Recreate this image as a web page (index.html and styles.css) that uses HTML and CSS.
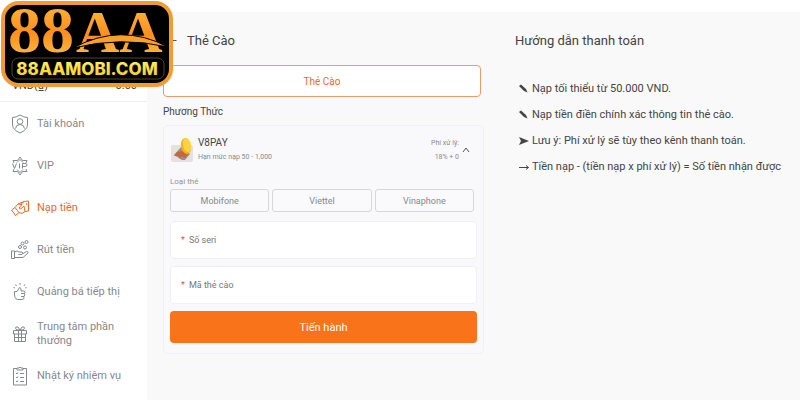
FILE: index.html
```html
<!DOCTYPE html>
<html lang="vi">
<head>
  <meta charset="UTF-8">
  <meta name="viewport" content="width=device-width, initial-scale=1.0">
  <title>Nạp tiền - Thẻ Cào</title>
  <link rel="stylesheet" href="styles.css">
</head>
<body>
  <a href="#" class="logo" aria-label="88AAMOBI.COM">
    <svg width="172" height="88" viewBox="0 0 172 88">
      <defs>
        <linearGradient id="gold" x1="0" y1="0" x2="0" y2="1">
          <stop offset="0" stop-color="#ffc043"/>
          <stop offset="0.55" stop-color="#fb8f1e"/>
          <stop offset="1" stop-color="#ffcb50"/>
        </linearGradient>
        <linearGradient id="yellow" x1="0" y1="0" x2="0" y2="1">
          <stop offset="0" stop-color="#fff36a"/>
          <stop offset="1" stop-color="#f5c81c"/>
        </linearGradient>
      </defs>
      <rect x="2" y="3" width="168" height="82" rx="16" fill="#000" stroke="#f09c33" stroke-width="4"/>
      <text x="7" y="52" class="logo-digits">88</text>
      <text x="75" y="52" class="logo-letters">AA</text>
      <path d="M72 48 Q120 22 167 47 Q120 36 72 48Z" fill="#f9a02c" stroke="#000" stroke-width="1"/>
      <rect x="11" y="58" width="152" height="21" rx="6" fill="none" stroke="#50452b"/>
      <text x="86" y="75" text-anchor="middle" class="logo-domain">88AAMOBI.COM</text>
    </svg>
  </a>

  <div class="page">
    <aside class="sidebar">
      <div class="balance"><span>VND(₫)</span><span>0.00</span></div>
      <nav class="menu">
        <a href="#">
          <svg viewBox="0 0 18 20"><path d="M9 1 Q13 3.5 16.500 3.500 V11 Q16 16 9 19 Q2 16 1.500 11 V3.500 Q5 3.500 9 1Z"/><circle cx="9" cy="7.500" r="2.800"/><path d="M4.500 14.500 Q5 10.500 9 10.500 Q13 10.500 13.500 14.500"/></svg>
          <span>Tài khoản</span>
        </a>
        <a href="#">
          <svg viewBox="0 0 18 20"><path d="M3 7 L2 4.500 H6.500 L9 1 L11.500 4.500 H16 L15 7 M3 13 L2 15.500 H6.500 L9 19 L11.500 15.500 H16 L15 13 M6 6.500 L9 3.500 L12 6.500 M6 13.500 L9 16.500 L12 13.500 M1.500 7.500 L3.500 12.500 L5.500 7.500 M8.500 7.500 V12.500 M11.500 12.500 V7.500 H14 Q16 7.500 16 9 Q16 10.500 14 10.500 H11.500"/></svg>
          <span>VIP</span>
        </a>
        <a href="#" class="active">
          <svg viewBox="0 0 18 20"><path d="M0.500 12 L4 9.500 L8 14.500 L4.500 17.500Z M4 9.500 L7 6 L13 3.500 L17.500 3 V13 L14 13.500 L11 15.500 L8 14.500 M7 6 L11 6.500 L8 10 Q9.500 11.500 11 10 L13 8 L14 13.500 M13 3.500 L9.500 6.500"/><circle cx="15.500" cy="6" r="0.500"/></svg>
          <span>Nạp tiền</span>
        </a>
        <a href="#">
          <svg viewBox="0 0 18 20"><path d="M0.500 11 H3.500 V18.500 H0.500Z M3.500 12 Q6 10 8 12 H11 Q12.500 13 11 14.500 H7.500 M12 13.500 L15.500 11.500 Q17.500 11.500 17 13 L12 17.500 H3.500"/><circle cx="9" cy="7" r="1.500"/><circle cx="11.500" cy="3.500" r="1.500"/><circle cx="15.500" cy="2" r="1.500"/><circle cx="14" cy="7.500" r="1.500"/></svg>
          <span>Rút tiền</span>
        </a>
        <a href="#">
          <svg viewBox="0 0 18 20"><path d="M3.500 9.500 H6 L8.500 5.500 Q10.500 5.500 10 9 H13.500 Q14.500 10 13.500 11.500 Q14.500 13 13 14.500 Q13.500 17.500 11 17.500 H6.500 Q3 17 3.500 9.500Z M10 11.500 H13.500 M10 14.500 H13 M9 1 V3 M4.500 2.500 L5.500 4 M14 2.500 L13 4 M2.500 5.500 L4 6 M15.500 5.500 L14 6"/></svg>
          <span>Quảng bá tiếp thị</span>
        </a>
        <a href="#">
          <svg viewBox="0 0 18 20"><path d="M2.500 6.500 H15.500 V10 H2.500Z M3.500 10 V17.500 H14.500 V10 M7.500 6.500 V17.500 M10.500 6.500 V17.500 M3.500 13.500 H14.500 M9 6 Q3 6 5 3 Q7 1.500 9 6 Q11 1.500 13 3 Q15 6 9 6"/></svg>
          <span>Trung tâm phần thưởng</span>
        </a>
        <a href="#">
          <svg viewBox="0 0 18 20"><path d="M6 2.500 H2.500 V19 H15.500 V2.500 H12 M6 4 V2 H8 Q9 0 10 2 H12 V4Z M5 7 L6 8 L7 6.500 M9 7.500 H13 M5 11 L6 12 L7 10.500 M9 11.500 H13 M5 15 L6 16 L7 14.500 M9 15.500 H13"/></svg>
          <span>Nhật ký nhiệm vụ</span>
        </a>
      </nav>
    </aside>

    <main class="content">
      <section class="payment">
        <header class="title">
          <button type="button" class="back" aria-label="Quay lại">
            <svg width="14" height="12" viewBox="0 0 14 12"><path d="M13.500 5.500 H1 M5.500 1 L1 5.500 L5.500 10"/></svg>
          </button>
          <h1>Thẻ Cào</h1>
        </header>
        <button type="button" class="tab">Thẻ Cào</button>
        <h2>Phương Thức</h2>

        <form class="card">
          <div class="method">
            <svg class="method-icon" width="24" height="26" viewBox="0 0 24 26">
              <rect x="1" y="8" width="22" height="17" rx="2" fill="#e6e1de"/>
              <path d="M4 18 L12 9 L20 17 L15 23 H12Z" fill="#96918f"/>
              <path d="M4 19 L7 15 L15 14 L18 17 L15 21 L12 19 L10 22 L9 19Z" fill="#c9653d"/>
              <ellipse cx="16" cy="9" rx="5" ry="8" fill="#f2b51d" transform="rotate(-12 16 9)"/>
              <ellipse cx="17" cy="8" rx="4" ry="7" fill="#ffd33f" transform="rotate(-12 17 8)"/>
            </svg>
            <div class="method-info">
              <strong>V8PAY</strong>
              <small>Hạn mức nạp 50 - 1,000</small>
            </div>
            <div class="fee"><span>Phí xử lý:</span><span>18% + 0</span></div>
            <button type="button" class="toggle" aria-label="Thu gọn">
              <svg width="8" height="6" viewBox="0 0 8 6"><path d="M1 5 L4 1 L7 5"/></svg>
            </button>
          </div>

          <div class="card-type">Loại thẻ</div>
          <div class="types">
            <button type="button">Mobifone</button>
            <button type="button">Viettel</button>
            <button type="button">Vinaphone</button>
          </div>

          <label class="field"><span>*</span><input type="text" placeholder="Số seri" aria-label="Số seri"></label>
          <label class="field"><span>*</span><input type="text" placeholder="Mã thẻ cào" aria-label="Mã thẻ cào"></label>
          <button type="submit" class="submit">Tiến hành</button>
        </form>
      </section>

      <section class="guide">
        <h1>Hướng dẫn thanh toán</h1>
        <ul>
          <li>
            <svg viewBox="0 0 12 12"><path d="M1 3 L3 1.500 L8 6 L9.500 9.500 L6 8Z" fill="#454545"/></svg>
            <span>Nạp tối thiểu từ 50.000 VND.</span>
          </li>
          <li>
            <svg viewBox="0 0 12 12"><path d="M1 3 L3 1.500 L8 6 L9.500 9.500 L6 8Z" fill="#454545"/></svg>
            <span>Nạp tiền điền chính xác thông tin thẻ cào.</span>
          </li>
          <li>
            <svg viewBox="0 0 12 12"><path d="M1 2 L11 6 L1 10 L3 6Z" fill="#454545"/></svg>
            <span>Lưu ý: Phí xử lý sẽ tùy theo kênh thanh toán.</span>
          </li>
          <li>
            <svg viewBox="0 0 12 12"><path d="M1 6.500 H10.500 M8 4.500 L10.500 6.500 L8 8.500" fill="none" stroke="#454545"/></svg>
            <span>Tiền nạp - (tiền nạp x phí xử lý) = Số tiền nhận được</span>
          </li>
        </ul>
      </section>
    </main>
  </div>
</body>
</html>
```
FILE: styles.css
```css
* {
  box-sizing: border-box;
}

body {
  margin: 0;
  background: #fff;
  color: #444;
  font-family: Roboto, "Noto Sans", sans-serif;
  font-size: 11px;
}

h1, h2, ul {
  margin: 0;
  padding: 0;
  font-weight: normal;
}

button {
  font-family: inherit;
  cursor: pointer;
}

/* Logo floats over the page corner */
.logo {
  position: absolute;
  top: 0;
  left: 1px;
  z-index: 2;
}

.logo svg {
  display: block;
}

.logo-digits,
.logo-letters {
  font-family: "Liberation Serif", serif;
  font-weight: bold;
  fill: url(#gold);
}

.logo-digits {
  font-size: 66px;
}

.logo-letters {
  font-size: 60px;
}

.logo-domain {
  font-family: Inter, sans-serif;
  font-size: 17px;
  font-weight: 800;
  fill: url(#yellow);
}

.page {
  display: grid;
  grid-template-columns: 147px 1fr;
  min-height: 100vh;
}

/* Sidebar */
.balance {
  display: flex;
  justify-content: space-between;
  align-items: flex-end;
  height: 102px;
  padding: 0 10px 9px 12px;
  border-bottom: 1px solid #eee;
}

.menu {
  padding-top: 1px;
}

.menu a {
  display: flex;
  align-items: center;
  gap: 8px;
  height: 42px;
  padding: 0 16px 0 11px;
  color: #85898d;
  font-size: 11px;
  line-height: 14px;
  text-decoration: none;
}

.menu svg {
  flex: none;
  width: 18px;
  height: 20px;
  fill: none;
  stroke: currentColor;
  stroke-width: 1;
}

.menu .active {
  color: #f0682c;
}

/* Content */
.content {
  display: grid;
  grid-template-columns: 321fr 285fr;
  align-items: start;
  gap: 31px;
  margin-top: 12px;
  padding: 16px 0 0 16px;
  background: #f9f9f9;
}

.title {
  display: flex;
  align-items: center;
  gap: 10px;
  margin-bottom: 12px;
}

h1 {
  font-size: 13px;
  line-height: 25px;
}

.back {
  display: flex;
  padding: 0;
  border: 0;
  background: none;
}

.back svg,
.toggle svg {
  fill: none;
  stroke: #555;
}

.tab {
  display: block;
  width: calc(100% - 3px);
  height: 32px;
  border: 1px solid #eb9b6c;
  border-radius: 4px;
  background: #fff;
  color: #ee6a24;
  font-size: 10px;
}

h2 {
  margin: 6px 0 4px;
  font-size: 10px;
  line-height: 18px;
}

.card {
  padding: 10px 6px;
  border: 1px solid #f0f1f4;
  border-radius: 5px;
  background: #f9f9fb;
}

.method {
  display: flex;
  align-items: center;
}

.method-info {
  display: flex;
  flex: 1;
  flex-direction: column;
  margin-left: 4px;
}

.method strong {
  font-size: 10px;
  font-weight: normal;
  line-height: 14px;
}

.method small,
.fee {
  color: #8a8a8a;
  font-size: 7px;
  line-height: 14px;
}

.fee {
  display: flex;
  flex-direction: column;
  text-align: right;
}

.toggle {
  display: flex;
  margin: 0 7px 0 3px;
  padding: 0;
  border: 0;
  background: none;
}

.card-type {
  margin-top: 11px;
  color: #909399;
  font-size: 8px;
  line-height: 14px;
}

.types {
  display: grid;
  grid-template-columns: repeat(3, 1fr);
  gap: 3px;
  margin: 0 3px 9px 0;
}

.types button {
  height: 23px;
  padding: 0;
  border: 1px solid #d6d7dc;
  border-radius: 3px;
  background: #fafafc;
  color: #85888c;
  font-size: 9px;
}

.field {
  display: flex;
  align-items: center;
  gap: 4px;
  height: 38px;
  margin-bottom: 7px;
  padding: 0 10px;
  border: 1px solid #eff0f3;
  border-radius: 4px;
  background: #fff;
}

.field span {
  color: #dc5548;
  font-size: 9px;
}

.field input {
  flex: 1;
  min-width: 0;
  padding: 0;
  border: 0;
  outline: 0;
  background: none;
  color: #444;
  font-family: inherit;
  font-size: 9px;
}

.field input::placeholder {
  color: #777;
}

.submit {
  display: block;
  width: 100%;
  height: 32px;
  border: 0;
  border-radius: 4px;
  background: #f9731b;
  color: #fff;
  font-size: 11px;
}

/* Payment guide */
.guide ul {
  margin-top: 23px;
  padding-left: 3px;
  list-style: none;
}

.guide li {
  display: flex;
  align-items: center;
  gap: 2px;
  font-size: 11px;
  line-height: 26px;
  white-space: nowrap;
}

.guide li svg {
  flex: none;
  width: 12px;
  height: 12px;
}
```
